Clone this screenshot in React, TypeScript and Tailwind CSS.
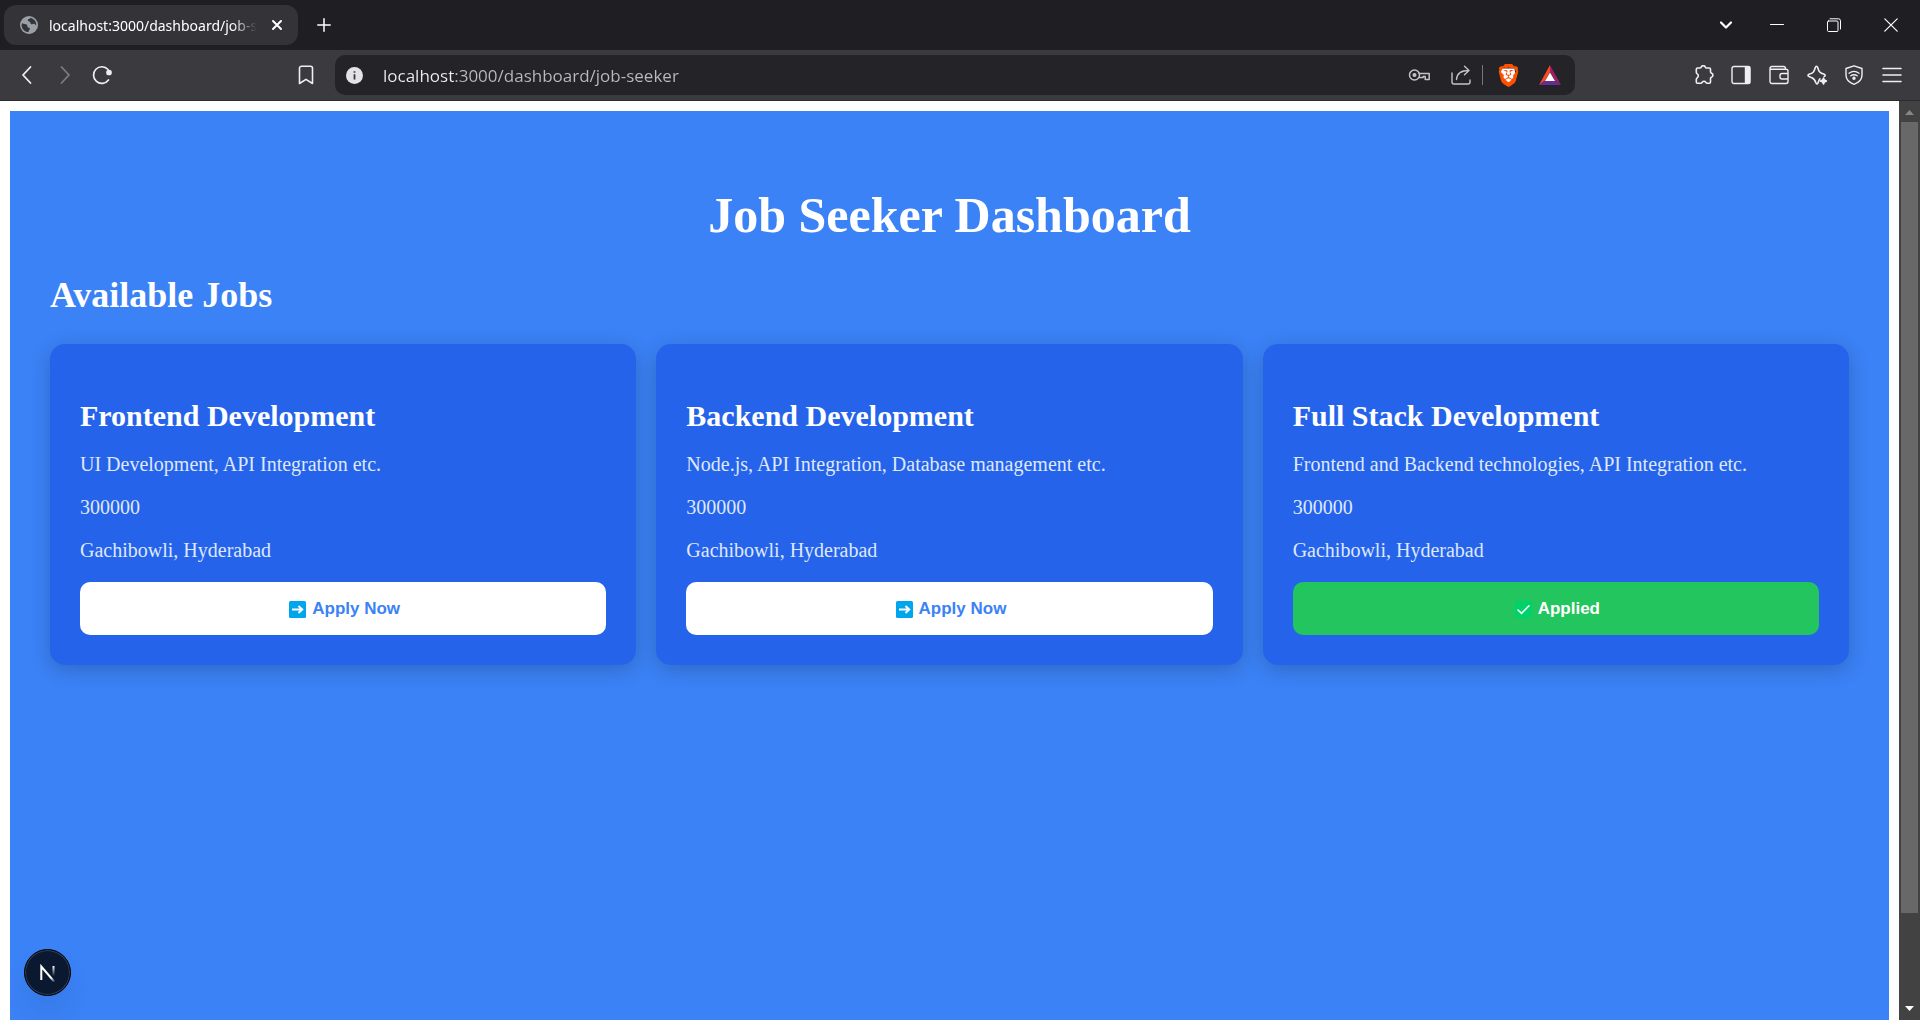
import type { ReactNode } from "react";
import { SiBrave } from "react-icons/si";

type Job = { title: string; description: string; salary: string; location: string; applied: boolean };

const jobs: Job[] = [
  {
    title: "Frontend Development",
    description: "UI Development, API Integration etc.",
    salary: "300000",
    location: "Gachibowli, Hyderabad",
    applied: false,
  },
  {
    title: "Backend Development",
    description: "Node.js, API Integration, Database management etc.",
    salary: "300000",
    location: "Gachibowli, Hyderabad",
    applied: false,
  },
  {
    title: "Full Stack Development",
    description: "Frontend and Backend technologies, API Integration etc.",
    salary: "300000",
    location: "Gachibowli, Hyderabad",
    applied: true,
  },
];

function Glyph({ size = 20, width = 1.4, children }: { size?: number; width?: number; children: ReactNode }) {
  return (
    <svg
      width={size}
      height={size}
      viewBox={`0 0 ${size} ${size}`}
      fill="none"
      stroke="currentColor"
      strokeWidth={width}
      strokeLinecap="round"
      strokeLinejoin="round"
      aria-hidden="true"
      className="shrink-0"
    >
      {children}
    </svg>
  );
}

function IconButton({ label, className = "", children }: { label: string; className?: string; children: ReactNode }) {
  return (
    <button type="button" aria-label={label} className={`flex shrink-0 items-center justify-center ${className}`}>
      {children}
    </button>
  );
}

function TabStrip() {
  return (
    <div className="flex h-[50px] shrink-0 items-center bg-[#1f1e23] text-white">
      <div className="ml-1 flex h-10 w-[294px] items-center rounded-xl bg-[#343338] pl-4">
        <svg width="18" height="18" viewBox="0 0 18 18" className="shrink-0" aria-hidden="true">
          <circle cx="9" cy="9" r="9" fill="#9aa0a6" />
          <path
            d="M2 7.2c2.2 1.2 3.6.6 4.7 1.4 1.200.9.2 2 1 2.700.8.7 2.200.2 2.200 1.400 0 1-1.300 1.300-1.400 3.400C4.500 16 1.500 12.500 1.600 9zM10.500 2c-.6 1-2.500.8-2.700 2-.2 1.300 1.500 1.100 2.200 2 .8 1 .3 2 1.500 2.300 1.300.3 1.700-1 2.700-.5.900.4.800 1.300 2 1.400.3-3.400-2-6.500-5.700-7.200z"
            fill="#343338"
          />
        </svg>
        <span className="ml-[11px] w-[208px] whitespace-nowrap font-['Noto_Sans',sans-serif] text-[14px] [mask-image:linear-gradient(to_right,black_88%,transparent)]">
          localhost:3000/dashboard/job-s
        </span>
        <IconButton label="Close tab" className="ml-2 size-6">
          <Glyph size={12} width={2}>
            <path d="M2 2l8 8M10 2l-8 8" />
          </Glyph>
        </IconButton>
      </div>
      <IconButton label="New tab" className="ml-3 size-7">
        <Glyph size={14} width={1.5}>
          <path d="M7 .8v12.400M.8 7h12.400" />
        </Glyph>
      </IconButton>
      <div className="ml-auto flex h-full">
        <IconButton label="Search tabs" className="w-11">
          <Glyph size={14} width={2.200}>
            <path d="M2 4.500l5 5 5-5" />
          </Glyph>
        </IconButton>
        <IconButton label="Minimize" className="w-[58px]">
          <Glyph size={14} width={1}>
            <path d="M.5 6.500h13" />
          </Glyph>
        </IconButton>
        <IconButton label="Restore" className="w-[56px]">
          <Glyph size={14} width={1}>
            <rect x=".5" y="3" width="10.500" height="10.500" rx="1" />
            <path d="M3 .8h8.500a2 2 0 0 1 2 2V11" />
          </Glyph>
        </IconButton>
        <IconButton label="Close window" className="w-[58px]">
          <Glyph size={14} width={1.200}>
            <path d="M.8.8l12.400 12.400M13.200.8L.8 13.200" />
          </Glyph>
        </IconButton>
      </div>
    </div>
  );
}

function AddressBar() {
  return (
    <div className="flex h-10 min-w-0 flex-1 items-center rounded-[10px] bg-[#242328] pl-[11px] pr-1">
      <button type="button" aria-label="Site information" className="shrink-0">
        <svg width="17" height="17" viewBox="0 0 17 17" aria-hidden="true">
          <circle cx="8.500" cy="8.500" r="8.500" fill="#e3e2e8" />
          <path d="M8.500 4.200v1.600M8.500 7.300v5.300" stroke="#3a393f" strokeWidth="1.800" />
        </svg>
      </button>
      <input
        aria-label="Address"
        defaultValue="localhost:3000/dashboard/job-seeker"
        className="ml-5 h-8 min-w-0 flex-1 bg-[linear-gradient(to_right,#efeef4_71px,#bbbac2_71px)] bg-clip-text font-['Open_Sans',sans-serif] text-[17px] text-transparent caret-white outline-none"
      />
      <div className="flex shrink-0 items-center text-[#c3c2ca]">
        <IconButton label="Passwords" className="w-[42px]">
          <Glyph size={22} width={1.500}>
            <circle cx="6.500" cy="11" r="5" />
            <circle cx="6.500" cy="11" r="1.300" fill="currentColor" />
            <path d="M11.200 9.400h10v6.200h-4v-3h-2v.8h-4" />
          </Glyph>
        </IconButton>
        <IconButton label="Share" className="w-[42px]">
          <Glyph>
            <path d="M1 8v9a2 2 0 0 0 2 2h14a2 2 0 0 0 2-2v-2M5.500 14.500c.3-5.500 3.500-9 12.500-9M13.500 1.200L18 5.500l-4.500 4.300" />
          </Glyph>
        </IconButton>
        <span className="h-5 w-px bg-[#77767d]" />
        <IconButton label="Brave Shields" className="ml-1 w-[42px]">
          <span className="relative flex size-6 items-center justify-center text-[#ff5000]">
            <svg viewBox="0 0 24 24" className="absolute size-[22px]" aria-hidden="true">
              <path d="M5 5h14l1 5-4 9-4 3-4-3-4-9z" fill="#fff" />
            </svg>
            <SiBrave className="relative size-[23px]" />
          </span>
        </IconButton>
        <IconButton label="Brave Rewards" className="w-[42px]">
          <svg width="22" height="20" viewBox="0 0 22 20" aria-hidden="true">
            <path d="M11 0v7L6 15.500 0 20z" fill="#ff4724" />
            <path d="M11 0l11 20-6-4.500L11 7z" fill="#9e1f63" />
            <path d="M0 20l6-4.500h10l6 4.500z" fill="#662d91" />
            <path d="M11 7.500l5 8.500H6z" fill="#fff" />
          </svg>
        </IconButton>
      </div>
    </div>
  );
}

function Toolbar() {
  return (
    <div className="flex h-[51px] shrink-0 items-center border-b border-[#2b2a2f] bg-[#3b3a3f] text-[#efeef4]">
      <div className="flex w-[335px] shrink-0 items-center pl-2">
        <IconButton label="Back" className="w-[38px]">
          <Glyph width={1.800}>
            <path d="M13.500 2L6 10l7.500 8" />
          </Glyph>
        </IconButton>
        <IconButton label="Forward" className="w-[38px] text-[#7d7c82]">
          <Glyph width={1.800}>
            <path d="M6.500 2L14 10l-7.500 8" />
          </Glyph>
        </IconButton>
        <IconButton label="Reload" className="w-9">
          <Glyph width={1.700}>
            <path d="M16.500 15A8.300 8.300 0 1 1 16 4.500" />
            <circle cx="17" cy="7.500" r="2" fill="currentColor" />
          </Glyph>
        </IconButton>
        <IconButton label="Bookmark" className="ml-auto mr-[14px] w-[30px]">
          <Glyph width={1.600}>
            <path d="M5.500 1.200h9a2 2 0 0 1 2 2v15.300L10 14.300l-6.500 4.200V3.200a2 2 0 0 1 2-2z" />
          </Glyph>
        </IconButton>
      </div>
      <AddressBar />
      <div className="ml-[110px] mr-[9px] grid w-[226px] shrink-0 grid-cols-6">
        <IconButton label="Extensions">
          <Glyph width={1.600}>
            <path d="M3.500 3h2.300c1.400 0 1.200-.5 1.500-1.200.7-1.500 3.200-1.500 3.900 0 .3.700.1 1.200 1.500 1.200h2.600c.8 0 1.200.5 1.200 1.200v2.600c0 1.200.5 1.100 1.200 1.500 1.600.8 1.600 3 0 3.800-.7.400-1.200.3-1.200 1.500V17c0 .8-.5 1.300-1.200 1.300h-2.100c-1.200 0-1-.4-1.400-1-.8-1.400-2.800-1.400-3.600 0-.4.600-.2 1-1.400 1H3.500c-.8 0-1.200-.5-1.200-1.300v-2.600c0-1 .3-1.200.9-1.600 1.500-.9 1.500-3 0-3.900-.6-.4-.9-.6-.9-1.600V4.200C2.300 3.500 2.700 3 3.500 3z" />
          </Glyph>
        </IconButton>
        <IconButton label="Sidebar">
          <Glyph>
            <rect x="1" y="1.500" width="18" height="17" rx="2" />
            <path d="M14.500 2h4v16h-4z" fill="currentColor" />
          </Glyph>
        </IconButton>
        <IconButton label="Wallet">
          <Glyph>
            <path d="M1.500 4.300h15.500a2 2 0 0 1 2 2v10.200a2 2 0 0 1-2 2H3a2 2 0 0 1-2-2V3.500a2 2 0 0 1 2-2h11.500a2 2 0 0 1 2 2v.8M19 8.500h-6a2 2 0 0 0-2 2V12a2 2 0 0 0 2 2h6" />
          </Glyph>
        </IconButton>
        <IconButton label="Leo AI">
          <Glyph width={1.600}>
            <path d="M13 13.800c-.8.500-1.300 2-1.900 3.900-.5 1.500-1.700 1.500-2.200 0-.9-3-1.400-4.200-4.600-5.300L2 11.500c-1.300-.5-1.300-1.700 0-2.200 4-1.200 5-2 6.400-7 .5-1.500 1.700-1.500 2.200 0 1.200 4.500 2.200 5.700 6.600 7 1.300.5 1.300 1.700 0 2.200" />
            <path d="M16.500 13l.9 2.100 2.100.9-2.100.9-.9 2.100-.9-2.100-2.100-.9 2.100-.9z" fill="currentColor" />
          </Glyph>
        </IconButton>
        <IconButton label="VPN">
          <Glyph>
            <path d="M10 .8l8 2.700V10c0 4-3 7.500-8 9.300C5 17.500 2 14 2 10V3.500z" />
            <path d="M5 8.200c3-2.200 7-2.200 10 0M6.800 10.800c2-1.400 4.400-1.400 6.400 0" />
            <circle cx="10" cy="13.200" r="1" fill="currentColor" />
          </Glyph>
        </IconButton>
        <IconButton label="Menu">
          <Glyph width={1.600}>
            <path d="M1 3.500h18M1 10h18M1 16.500h18" />
          </Glyph>
        </IconButton>
      </div>
    </div>
  );
}

function JobCard({ job }: { job: Job }) {
  return (
    <article className="rounded-[15px] bg-[#2563eb] p-[30px] shadow-[0_5px_20px_rgba(0,0,0,0.2)]">
      <h3 className="mt-[25px] text-[30px] font-bold leading-[34px] text-white">{job.title}</h3>
      <div className="my-5 flex flex-col gap-5 text-[20px] leading-[23px] text-[#dfe8fc]">
        <p>{job.description}</p>
        <p>{job.salary}</p>
        <p>{job.location}</p>
      </div>
      <button
        type="button"
        disabled={job.applied}
        className={`flex h-[53px] w-full items-center justify-center gap-[6px] rounded-[10px] pl-[3px] pt-px font-['Liberation_Sans',sans-serif] text-[17px] font-bold ${
          job.applied ? "bg-[#22c55e] text-white" : "bg-white text-[#3b82f6]"
        }`}
      >
        <svg width="17" height="17" viewBox="0 0 17 17" fill="none" aria-hidden="true">
          <rect width="17" height="17" rx="1.500" fill={job.applied ? "#00d26a" : "#00a6ed"} />
          {job.applied ? (
            <path d="M3 9l3.500 3.300L14 4.800" stroke="#fff" strokeWidth="1.600" strokeLinecap="round" />
          ) : (
            <path d="M3 8.500h10M9.500 5l3.700 3.500L9.500 12" stroke="#fff" strokeWidth="2" />
          )}
        </svg>
        {job.applied ? "Applied" : "Apply Now"}
      </button>
    </article>
  );
}

function Scrollbar() {
  return (
    <div className="flex w-[21px] shrink-0 flex-col bg-[#424242]" aria-hidden="true">
      <svg viewBox="0 0 21 21" className="size-[21px] shrink-0">
        <path d="M6 14l4.500-5 4.500 5z" fill="#868686" />
      </svg>
      <div className="min-h-0 flex-1 px-[2px]">
        <div className="h-[90%] bg-[#686868]" />
      </div>
      <svg viewBox="0 0 21 19" className="h-[19px] w-[21px] shrink-0">
        <path d="M6 5l4.500 5L15 5z" fill="#fff" />
      </svg>
    </div>
  );
}

export default function App() {
  return (
    <div className="flex h-screen flex-col overflow-hidden">
      <TabStrip />
      <Toolbar />
      <div className="flex min-h-0 flex-1">
        <div className="relative flex min-w-0 flex-1 flex-col bg-white px-[10px] pt-[10px]">
          <main className="flex-1 bg-[#3b82f6] px-10 pt-[75px] font-['Liberation_Serif',serif] text-white">
            <h1 className="text-center text-[50px] font-bold leading-[58px]">Job Seeker Dashboard</h1>
            <h2 className="mt-[31px] text-[36px] font-bold leading-[40px]">Available Jobs</h2>
            <div className="mt-[29px] grid grid-cols-3 gap-5">
              {jobs.map((job) => (
                <JobCard key={job.title} job={job} />
              ))}
            </div>
          </main>
          <button
            type="button"
            aria-label="Open Next.js Dev Tools"
            className="absolute bottom-6 left-6 flex size-[47px] items-center justify-center rounded-full border border-black bg-[#0b1930] shadow-[inset_0_0_0_1px_rgba(255,255,255,0.17),0_16px_32px_-8px_rgba(0,0,0,0.14)]"
          >
            <svg width="18" height="18" viewBox="0 0 18 18" fill="none" aria-hidden="true">
              <defs>
                <linearGradient id="nDiagonal" x1="9" y1="9" x2="16" y2="18" gradientUnits="userSpaceOnUse">
                  <stop offset=".5" stopColor="#fff" />
                  <stop offset="1" stopColor="#fff" stopOpacity="0" />
                </linearGradient>
                <linearGradient id="nStem" x1="14" y1="2" x2="14" y2="12" gradientUnits="userSpaceOnUse">
                  <stop stopColor="#fff" />
                  <stop offset="1" stopColor="#fff" stopOpacity="0" />
                </linearGradient>
              </defs>
              <path d="M2.300 16V2.500L15.500 18" stroke="url(#nDiagonal)" strokeWidth="2" />
              <path d="M14.500 2v10.500" stroke="url(#nStem)" strokeWidth="2" />
            </svg>
          </button>
        </div>
        <Scrollbar />
      </div>
    </div>
  );
}
